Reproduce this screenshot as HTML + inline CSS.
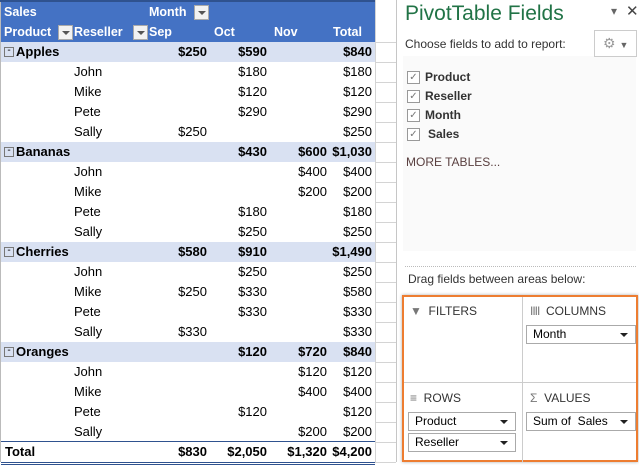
<!DOCTYPE html><html><head><style>
body{margin:0;width:639px;height:462px;overflow:hidden;background:#fff;font-family:"Liberation Sans",sans-serif;position:relative}
.a{position:absolute;white-space:nowrap}
.r{position:absolute;left:1px;width:374px;height:20px;font-size:13px;line-height:20px}
.r span{position:absolute}
.n{text-align:right}
.g{position:absolute;left:375px;width:21px;height:1px;background:#d4d4d4}
.dd{display:block;width:13px;height:13px;background:#f2f2f2;border:1px solid #aaa;top:3px}
.dd:after{content:"";position:absolute;left:3px;top:5px;border-left:4px solid transparent;border-right:4px solid transparent;border-top:4px solid #555}
.box{position:absolute;height:17px;border:1px solid #aaa;background:#fff;font-size:12px;line-height:17px;padding-left:6px;box-sizing:content-box}
.box:after{content:"";position:absolute;right:7px;top:7px;border-left:4px solid transparent;border-right:4px solid transparent;border-top:4px solid #222}
.cb{position:absolute;left:407px;width:11px;height:11px;border:1px solid #999;background:#fff;font-size:10px;line-height:11px;text-align:center;color:#777}
.fl{position:absolute;left:425px;font-size:12px;font-weight:bold;color:#333}
</style></head><body>
<div class="a" style="left:0;top:0;width:1px;height:462px;background:#bbb"></div>
<div class="a" style="left:1px;top:2px;width:374px;height:40px;background:#4472c4"></div>
<div class="a" style="left:0;top:0;width:376px;height:2px;background:#2f528f"></div>
<div class="r" style="top:2px;color:#fff;font-weight:bold;font-size:12.5px"><span style="left:3px">Sales</span><span style="left:148px">Month</span><span class="dd" style="left:193px"></span></div>
<div class="r" style="top:22px;color:#fff;font-weight:bold;font-size:12.5px"><span style="left:3px">Product</span><span class="dd" style="left:57px"></span><span style="left:73px">Reseller</span><span class="dd" style="left:132px"></span><span style="left:148px">Sep</span><span style="left:213px">Oct</span><span style="left:273px">Nov</span><span style="left:332px">Total</span></div>
<div id="rows"></div>
<script>
var d=[["Apples","$250","$590","","$840"],["John","","$180","","$180"],["Mike","","$120","","$120"],["Pete","","$290","","$290"],["Sally","$250","","","$250"],
["Bananas","","$430","$600","$1,030"],["John","","","$400","$400"],["Mike","","","$200","$200"],["Pete","","$180","","$180"],["Sally","","$250","","$250"],
["Cherries","$580","$910","","$1,490"],["John","","$250","","$250"],["Mike","$250","$330","","$580"],["Pete","","$330","","$330"],["Sally","$330","","","$330"],
["Oranges","","$120","$720","$840"],["John","","","$120","$120"],["Mike","","","$400","$400"],["Pete","","$120","","$120"],["Sally","","","$200","$200"],
["Total","$830","$2,050","$1,320","$4,200"]];
var h="",R=[207,267,327,372];
d.forEach(function(r,i){var t=42+i*20,p=i%5==0&&i<20,tot=i==20;
var st="top:"+t+"px;";if(p)st+="background:#d9e1f2;font-weight:bold;";if(tot)st+="font-weight:bold;border-top:1px solid #2f528f;border-bottom:3px double #2f528f;top:"+(t-1)+"px;";
h+='<div class="r" style="'+st+'">';
if(p)h+='<span style="left:3px;top:5px;width:8px;height:8px;border:1px solid #777;line-height:6px;font-size:10px;text-align:center;font-weight:normal">-</span><span style="left:15px">'+r[0]+'</span>';
else if(tot)h+='<span style="left:4px">'+r[0]+'</span>';
else h+='<span style="left:73px">'+r[0]+'</span>';
for(var k=1;k<5;k++)if(r[k])h+='<span class="n" style="right:'+(375-R[k-1])+'px">'+r[k]+'</span>';
h+='</div>';});
for(var y=22;y<462;y+=20)h+='<div class="g" style="top:'+(y+20)+'px"></div>';
document.getElementById("rows").innerHTML=h;
</script>
<div class="a" style="left:375px;top:0;width:1px;height:462px;background:#d4d4d4"></div>
<div class="a" style="left:396px;top:0;width:243px;height:462px;background:#fff;border-left:1px solid #c6c6c6"></div>
<div class="a" style="left:403px;top:56px;width:233px;height:195px;background:#fafafa"></div>
<div class="a" style="left:405px;top:2px;font-size:21px;color:#217346">PivotTable Fields</div>
<div class="a" style="left:611px;top:4px;font-size:12px;color:#666">▾</div>
<div class="a" style="left:626px;top:2px;font-size:15px;color:#444">✕</div>
<div class="a" style="left:405px;top:37px;font-size:12px;color:#333">Choose fields to add to report:</div>
<div class="a" style="left:594px;top:30px;width:41px;height:25px;border:1px solid #ccc;background:#fff;font-size:14px;color:#999;line-height:25px;text-indent:8px">⚙ <span style="font-size:9px;color:#666">▼</span></div>
<div class="cb" style="top:71px">✓</div><div class="fl" style="top:70px">Product</div>
<div class="cb" style="top:90px">✓</div><div class="fl" style="top:89px">Reseller</div>
<div class="cb" style="top:109px">✓</div><div class="fl" style="top:108px">Month</div>
<div class="cb" style="top:128px">✓</div><div class="fl" style="top:127px;left:428px">Sales</div>
<div class="a" style="left:406px;top:155px;font-size:12px;color:#5a4040">MORE TABLES...</div>
<div class="a" style="left:405px;top:266px;width:231px;border-top:1px dotted #bbb"></div>
<div class="a" style="left:408px;top:272px;font-size:12px;color:#333">Drag fields between areas below:</div>
<div class="a" style="left:402px;top:295px;width:232px;height:163px;border:2px solid #ed7d31;box-shadow:0 0 3px #aaa"></div>
<div class="a" style="left:522px;top:297px;width:1px;height:165px;background:#ccc"></div>
<div class="a" style="left:404px;top:382px;width:232px;height:1px;background:#ccc"></div>
<div class="a" style="left:410px;top:304px;font-size:12px;color:#333"><span style="color:#777">▼</span>&nbsp; FILTERS</div>
<div class="a" style="left:530px;top:304px;font-size:12px;color:#333"><span style="color:#777;letter-spacing:-1px">IIII</span>&nbsp; COLUMNS</div>
<div class="a" style="left:410px;top:391px;font-size:12px;color:#333"><span style="color:#777">≡</span>&nbsp; ROWS</div>
<div class="a" style="left:530px;top:391px;font-size:12px;color:#333"><span style="color:#777">Σ</span>&nbsp; VALUES</div>
<div class="box" style="left:526px;top:325px;width:102px">Month</div>
<div class="box" style="left:408px;top:412px;width:100px">Product</div>
<div class="box" style="left:408px;top:433px;width:100px">Reseller</div>
<div class="box" style="left:526px;top:412px;width:102px">Sum of &nbsp;Sales</div>
</body></html>
